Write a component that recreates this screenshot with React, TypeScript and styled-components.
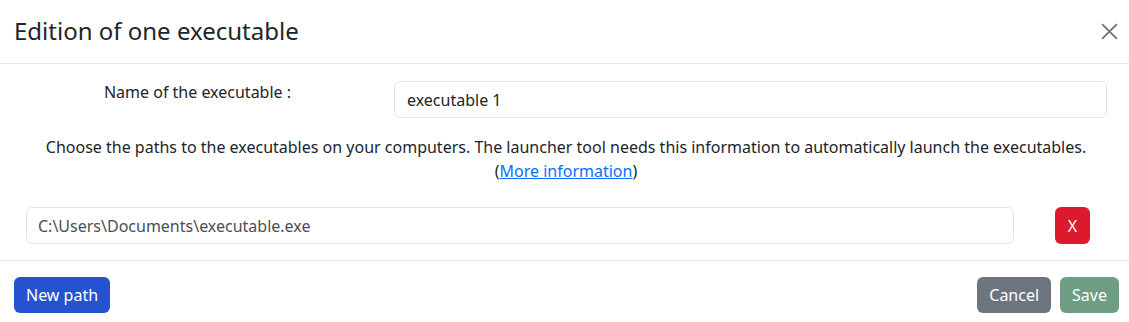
import React from "react";
import styled, { createGlobalStyle } from "styled-components";

const Global = createGlobalStyle`
  html, body { margin: 0; padding: 0; background: #ffffff; }
  body { font-family: "Noto Sans", "Open Sans", sans-serif; color: #212529; }
  * { box-sizing: border-box; }
`;

const Modal = styled.div`
  width: 1129px;
  background: #fff;
  display: flex;
  flex-direction: column;
`;

const Header = styled.div`
  height: 64px;
  display: flex;
  align-items: center;
  justify-content: space-between;
  padding: 0 8px 0 14px;
  border-bottom: 1px solid #e3e6ea;
`;

const Title = styled.h5`
  margin: 0;
  font-size: 24px;
  font-weight: 400;
  color: #212529;
  line-height: 1.2;
`;

const Close = styled.button`
  width: 24px;
  height: 24px;
  border: 0;
  background: transparent;
  padding: 0;
  display: flex;
  align-items: center;
  justify-content: center;
  cursor: pointer;
`;

const Body = styled.div`
  padding: 17px 22px 16px 16px;
  display: flex;
  flex-direction: column;
`;

const FieldRow = styled.div`
  display: grid;
  grid-template-columns: 363px 1fr;
  column-gap: 15px;
  align-items: start;
`;

const Label = styled.label`
  text-align: center;
  font-size: 16px;
  line-height: 22px;
  color: #212529;
`;

const Input = styled.input<{ $muted?: boolean }>`
  height: 37px;
  width: 100%;
  border: 1px solid #e2e5e8;
  border-radius: 6px;
  padding: 0 ${(p) => (p.$muted ? "11px" : "12px")};
  font-family: inherit;
  font-size: 16px;
  color: ${(p) => (p.$muted ? "#4a4f55" : "#212529")};
  background: #fff;
  outline: none;
`;

const Info = styled.p`
  margin: 17px 0 0;
  padding-left: 9px;
  text-align: center;
  font-size: 16px;
  line-height: 24px;
  color: #212529;
`;

const Link = styled.a`
  color: #0d6efd;
  text-decoration: underline;
`;

const PathRow = styled.div`
  margin-top: 24px;
  display: grid;
  grid-template-columns: 1fr 35px;
  column-gap: 41px;
  padding: 0 17px 0 10px;
`;

const Button = styled.button<{ $bg: string }>`
  height: 36px;
  padding: 0 12px;
  border: 0;
  border-radius: 6px;
  background: ${(p) => p.$bg};
  color: #fff;
  font-family: inherit;
  font-size: 16px;
  line-height: 36px;
  cursor: pointer;
`;

const RemoveButton = styled(Button)`
  height: 37px;
  padding: 0;
  width: 35px;
`;

const Footer = styled.div`
  border-top: 1px solid #e3e6ea;
  padding: 16px 10px 16px 14px;
  display: flex;
  align-items: center;
  justify-content: space-between;
`;

const Group = styled.div`
  display: flex;
  gap: 9px;
`;

export default function App() {
  return (
    <>
      <Global />
      <Modal>
        <Header>
          <Title>Edition of one executable</Title>
          <Close aria-label="Close">
            <svg width="17" height="17" viewBox="0 0 16 16">
              <path d="M1 1L15 15M15 1L1 15" stroke="#6b6f73" strokeWidth="1.6" fill="none" />
            </svg>
          </Close>
        </Header>
        <Body>
          <FieldRow>
            <Label>Name of the executable :</Label>
            <Input defaultValue="executable 1" />
          </FieldRow>
          <Info>
            Choose the paths to the executables on your computers. The launcher tool needs this information to automatically launch the executables.
            <br />
            (<Link href="#">More information</Link>)
          </Info>
          <PathRow>
            <Input $muted defaultValue="C:\Users\Documents\executable.exe" />
            <RemoveButton $bg="#dc1a2e">X</RemoveButton>
          </PathRow>
        </Body>
        <Footer>
          <Button $bg="#2552cf">New path</Button>
          <Group>
            <Button $bg="#6c757d">Cancel</Button>
            <Button $bg="#6f9e85">Save</Button>
          </Group>
        </Footer>
      </Modal>
    </>
  );
}
